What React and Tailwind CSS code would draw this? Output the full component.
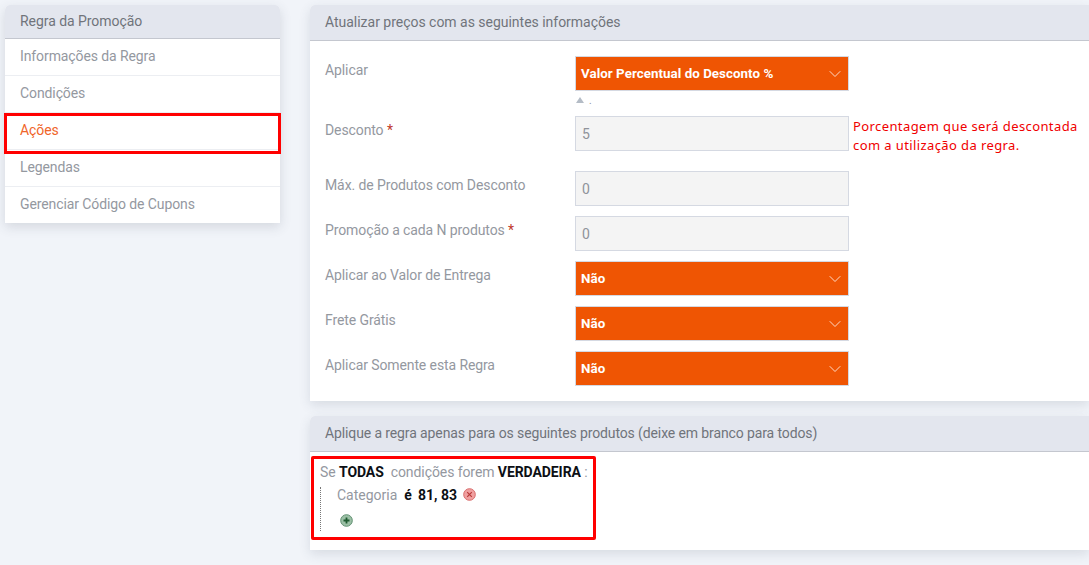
import React from "react";
import { ChevronDown } from "lucide-react";

const menu = ["Informações da Regra", "Condições", "Ações", "Legendas", "Gerenciar Código de Cupons"];

const Select = ({ value }) => (
  <div className="flex h-[35px] w-[274px] items-center justify-between border border-[#d5d9e2] bg-[#ef5503] pl-[5px] pr-[3px] text-[13.33px] font-bold tracking-[0.05px] text-white">
    <span>{value}</span>
    <ChevronDown size={20} strokeWidth={1.1} className="text-[#fde6d8]" />
  </div>
);

const Input = ({ value }) => (
  <div className="flex h-[35px] w-[274px] items-center border border-[#d5d9e2] bg-[#f4f4f4] pl-[6px] text-sm text-[#8f939a]">
    {value}
  </div>
);

const Row = ({ label, required, gap = "mb-[10px]", children }) => (
  <div className={`flex ${gap}`}>
    <div className="w-[265px] pl-[15px] pt-[5px] leading-[18px] tracking-[-0.1px] text-[#94989f]">
      {label}
      {required && <span className="text-[#c0392b]"> *</span>}
    </div>
    {children}
  </div>
);

export default function App() {
  return (
    <div className="relative flex h-[565px] w-[1089px] items-start overflow-hidden bg-[#f1f4f9] font-['Roboto',sans-serif] text-sm">
      <aside className="ml-[5px] mt-[5px] w-[275px] rounded-t-[5px] bg-white shadow-[0_4px_12px_rgba(60,70,90,0.16)]">
        <div className="flex h-[34px] items-center rounded-t-[5px] border-b border-[#c4c7cf] bg-[#e3e6ee] pb-[2px] pl-[15px] tracking-[-0.05px] text-[#70747b]">
          Regra da Promoção
        </div>
        {menu.map((item, i) => (
          <div
            key={item}
            className={`flex items-center pb-[2px] pl-[15px] tracking-[-0.1px] ${i < 4 ? "h-[37px] border-b border-[#eceef2]" : "h-[36px]"} ${item === "Ações" ? "text-[#f0652a]" : "text-[#94989f]"}`}
          >
            {item}
          </div>
        ))}
      </aside>

      <main className="ml-[30px] mt-[5px] flex-1">
        <section className="h-[396px] rounded-tl-[5px] bg-white shadow-[0_4px_12px_rgba(60,70,90,0.14)]">
          <div className="flex h-[36px] items-center rounded-tl-[5px] border-b border-[#c4c7cf] bg-[#e3e6ee] pb-[2px] pl-[15px] tracking-[-0.02px] text-[#70747b]">
            Atualizar preços com as seguintes informações
          </div>
          <div className="pt-[15px]">
            <div className="flex">
              <div className="w-[265px] pl-[15px] pt-[5px] leading-[18px] tracking-[-0.1px] text-[#94989f]">Aplicar</div>
              <div>
                <Select value="Valor Percentual do Desconto %" />
                <div className="flex h-[25px] items-start pl-[1px] pt-[4px] text-[10px] leading-[12px] text-[#8b9097]">
                  <span className="mt-[2px] h-0 w-0 border-x-[4px] border-b-[6px] border-x-transparent border-b-[#b4bcc6]" />
                  <span className="ml-[5px]">.</span>
                </div>
              </div>
            </div>
            <Row label="Desconto" required gap="mb-[16px]">
              <Input value="5" />
              <p className="ml-[4px] mt-[1px] font-['Noto_Sans',sans-serif] text-[13px] leading-[19px] tracking-[0.4px] text-[#f00000]">
                Porcentagem que será descontada
                <br />
                com a utilização da regra.
              </p>
            </Row>
            <Row label="Máx. de Produtos com Desconto">
              <Input value="0" />
            </Row>
            <Row label="Promoção a cada N produtos" required>
              <Input value="0" />
            </Row>
            <Row label="Aplicar ao Valor de Entrega">
              <Select value="Não" />
            </Row>
            <Row label="Frete Grátis">
              <Select value="Não" />
            </Row>
            <Row label="Aplicar Somente esta Regra">
              <Select value="Não" />
            </Row>
          </div>
        </section>

        <section className="mt-[15px] h-[134px] rounded-tl-[5px] bg-white shadow-[0_4px_12px_rgba(60,70,90,0.14)]">
          <div className="flex h-[36px] items-center rounded-tl-[5px] border-b border-[#c4c7cf] bg-[#e3e6ee] pb-[2px] pl-[15px] tracking-[-0.115px] text-[#70747b]">
            Aplique a regra apenas para os seguintes produtos (deixe em branco para todos)
          </div>
          <div className="pl-[10px] pt-[11px] text-[#94989f]">
            <div className="leading-[18px] tracking-[-0.08px]">
              Se <b className="font-bold text-[#0c0f14]">TODAS</b>
              <span className="ml-[7px]">condições forem</span> <b className="font-bold text-[#0c0f14]">VERDADEIRA</b> :
            </div>
            <div className="mt-[6px] h-[44px] border-l border-dotted border-[#777] pl-[16px]">
              <div className="flex h-[15px] items-center">
                <span>Categoria</span>
                <b className="ml-[7px] font-bold text-[#0c0f14]">é</b>
                <b className="ml-[6px] font-bold text-[#0c0f14]">81, 83</b>
                <svg width="13" height="13" viewBox="0 0 13 13" className="ml-[6px]">
                  <circle cx="6.5" cy="6.5" r="5.8" fill="#f0a0a0" stroke="#d86a6a" />
                  <path d="M4.2 4.2l4.6 4.6M8.8 4.2l-4.6 4.6" stroke="#b83a3a" strokeWidth="1.2" />
                </svg>
              </div>
              <svg width="13" height="13" viewBox="0 0 13 13" className="ml-[3px] mt-[12px]">
                <circle cx="6.5" cy="6.5" r="5.8" fill="#9cc0a6" stroke="#5f8f70" />
                <path d="M6.5 3.5v6M3.5 6.5h6" stroke="#1f5a30" strokeWidth="1.8" />
              </svg>
            </div>
          </div>
        </section>
      </main>

      <div className="absolute left-[4px] top-[113px] h-[41px] w-[277px] border-[3px] border-[#ff0000]" />
      <div className="absolute left-[311px] top-[456px] h-[84px] w-[285px] rounded-[2px] border-[3px] border-[#ff0000]" />
    </div>
  );
}
